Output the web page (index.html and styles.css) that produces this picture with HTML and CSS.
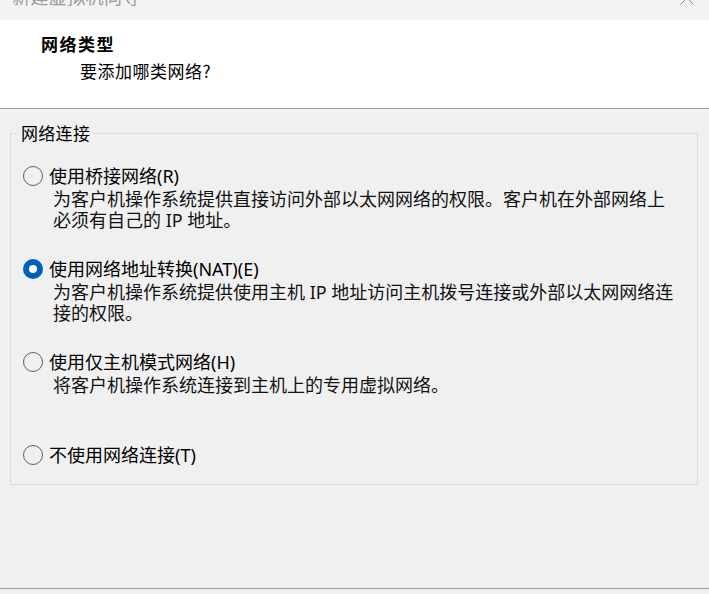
FILE: index.html
```html
<!DOCTYPE html>
<html lang="zh-CN">
<head>
<meta charset="utf-8">
<title>新建虚拟机向导</title>
<link rel="stylesheet" href="styles.css">
</head>
<body>
<div class="window">
  <div class="titlebar">
    <span class="title">新建虚拟机向导</span>
    <svg class="close" width="16" height="16" viewBox="0 0 16 16" aria-hidden="true">
      <path d="M1.5 1.5 L14.5 14.5 M14.5 1.5 L1.5 14.5" stroke="#8a8a8a" stroke-width="1" fill="none"/>
    </svg>
  </div>
  <header class="head">
    <h1 class="head-title">网络类型</h1>
    <p class="head-sub">要添加哪类网络?</p>
  </header>
  <main class="content">
    <fieldset class="group">
      <legend class="group-label">网络连接</legend>
      <div class="option">
        <div class="option-row"><span class="radio"></span><span class="option-label">使用桥接网络(R)</span></div>
        <p class="option-desc">为客户机操作系统提供直接访问外部以太网网络的权限。客户机在外部网络上<br>必须有自己的 IP 地址。</p>
      </div>
      <div class="option">
        <div class="option-row"><span class="radio checked"></span><span class="option-label">使用网络地址转换(NAT)(E)</span></div>
        <p class="option-desc">为客户机操作系统提供使用主机 IP 地址访问主机拨号连接或外部以太网网络连<br>接的权限。</p>
      </div>
      <div class="option">
        <div class="option-row"><span class="radio"></span><span class="option-label">使用仅主机模式网络(H)</span></div>
        <p class="option-desc">将客户机操作系统连接到主机上的专用虚拟网络。</p>
      </div>
      <div class="option last">
        <div class="option-row"><span class="radio"></span><span class="option-label">不使用网络连接(T)</span></div>
      </div>
    </fieldset>
  </main>
  <footer class="footer"></footer>
</div>
</body>
</html>
```

FILE: styles.css
```css
* { box-sizing: border-box; }

html, body {
  margin: 0;
  padding: 0;
  background: #f0f0f0;
}

body {
  font-family: "Noto Sans", "Noto Sans CJK SC", sans-serif;
  font-size: 18px;
  color: #000;
  width: 709px;
  height: 594px;
  overflow: hidden;
}

.window {
  display: flex;
  flex-direction: column;
  height: 594px;
}

.titlebar {
  height: 20px;
  background: #f3f3f3;
  display: flex;
  justify-content: space-between;
  align-items: flex-start;
  overflow: hidden;
  padding: 0 14px 0 12px;
}

.title {
  font-family: "Noto Sans CJK SC", sans-serif;
  font-size: 18px;
  line-height: 18px;
  color: #9a9a9a;
  margin-top: -13px;
  letter-spacing: 0.4px;
}

.close {
  margin-top: -10px;
}

.head {
  height: 89px;
  background: #fff;
  border-bottom: 1px solid #a0a0a0;
  padding: 14px 0 0 41px;
}

.head-title {
  margin: 0;
  font-family: "Noto Sans CJK SC", sans-serif;
  font-size: 17px;
  line-height: 20px;
  font-weight: 700;
  letter-spacing: 1.5px;
}

.head-sub {
  margin: 7px 0 0 39px;
  font-family: "Noto Sans CJK SC", sans-serif;
  font-size: 17px;
  line-height: 20px;
  letter-spacing: 0.5px;
}

.content {
  height: 479px;
  padding: 14px 11px 0 10px;
}

.group {
  margin: 0;
  padding: 23px 0 19px 0;
  border: 1px solid #dcdcdc;
  min-width: 0;
}

.group-label {
  margin-left: 7px;
  padding: 0 3px;
  font-family: "Noto Sans CJK SC", sans-serif;
  font-size: 17px;
  line-height: 20px;
  letter-spacing: 0.3px;
}

.option {
  height: 93px;
  padding-left: 12px;
}

.option.last {
  height: auto;
}

.option-row {
  display: flex;
  align-items: center;
  gap: 6px;
  height: 20px;
}

.option-label {
  line-height: 22px;
}

.radio {
  width: 20px;
  height: 20px;
  flex: none;
  border-radius: 50%;
  border: 1.5px solid #5f5f5f;
  background: #f0f0f0;
  display: flex;
  align-items: center;
  justify-content: center;
}

.radio.checked {
  border: none;
  background: #005fb8;
}

.radio.checked::after {
  content: "";
  width: 8px;
  height: 8px;
  border-radius: 50%;
  background: #fff;
}

.option-desc {
  margin: 3px 0 0 30px;
  line-height: 21px;
  color: #111;
  white-space: nowrap;
}

.footer {
  flex: 1;
  border-top: 1px solid #a0a0a0;
  background: #f0f0f0;
}
```
